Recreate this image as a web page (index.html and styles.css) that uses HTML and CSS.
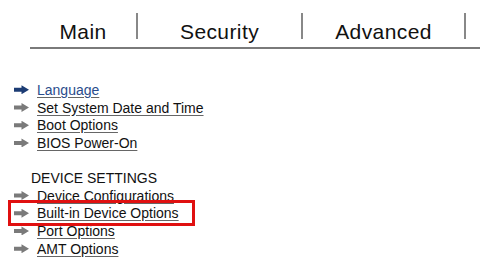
FILE: index.html
```html
<!DOCTYPE HTML><html>
<head>
	<meta name="viewport" charset="UTF-8" content="width=device-width, initial-scale=1">
	<title>BIOS Setup</title>
	<link rel="stylesheet" href="styles.css">
</head>
<body>
	<div class="tabs">
		<div class="tab tab-main">Main</div>
		<div class="tab">Security</div>
		<div class="tab">Advanced</div>
		<div class="tab tab-end"></div>
	</div>

	<ul class="menu">
		<li class="active"><span class="arrow"></span><a>Language</a></li>
		<li><span class="arrow"></span><a>Set System Date and Time</a></li>
		<li><span class="arrow"></span><a>Boot Options</a></li>
		<li><span class="arrow"></span><a>BIOS Power-On</a></li>
	</ul>

	<p class="group">DEVICE SETTINGS</p>
	<ul class="menu">
		<li><span class="arrow"></span><a>Device Configurations</a></li>
		<li class="selected"><span class="arrow"></span><a>Built-in Device Options</a></li>
		<li><span class="arrow"></span><a>Port Options</a></li>
		<li><span class="arrow"></span><a>AMT Options</a></li>
	</ul>
</body>
</html>
```

FILE: styles.css
```css
html {
	font-family: "Liberation Sans", Arial, sans-serif;}
body {
	background-color: #fff;
	margin: 0;
	color: #111;
}
.tabs {
	display: grid;
	grid-template-columns: 108px 165px 163px 14px;
	margin: 13px 0 0 30px;
	border-bottom: 2px solid #7a7a7a;
	font-size: 21px;
	letter-spacing: 0.4px;
	height: 34px;
}
.tab {
	text-align: center;
	border-right: 2px solid #888;
	height: 26px;
	line-height: 38px;
}
.tab-end {border-right: none;}

.menu {
	list-style: none;
	margin: 0;
	padding: 0 0 0 14px;
	font-size: 14px;
}
.menu:first-of-type {margin-top: 32px;}
.menu li {
	display: flex;
	align-items: center;
	height: 17.7px;
}
.menu a {
	text-decoration: underline;
	text-decoration-color: #666;
	text-underline-offset: 2px;
}
.arrow {
	width: 15px;
	height: 9px;
	margin-right: 8px;
	background: #7a7a7a;
	clip-path: polygon(0 28%, 50% 28%, 50% 0, 100% 50%, 50% 100%, 50% 72%, 0 72%);
}
.active .arrow {background: #1c3c74;}
.active a {color: #2a4c8c;}

.group {
	margin: 17px 0 0 31px;
	font-size: 14px;
	line-height: 18px;
}
.selected {
	outline: 3px solid #e01010;
	outline-offset: 1px;
	margin-left: -2px;
	padding-left: 2px;
	width: 177px;
}
```
